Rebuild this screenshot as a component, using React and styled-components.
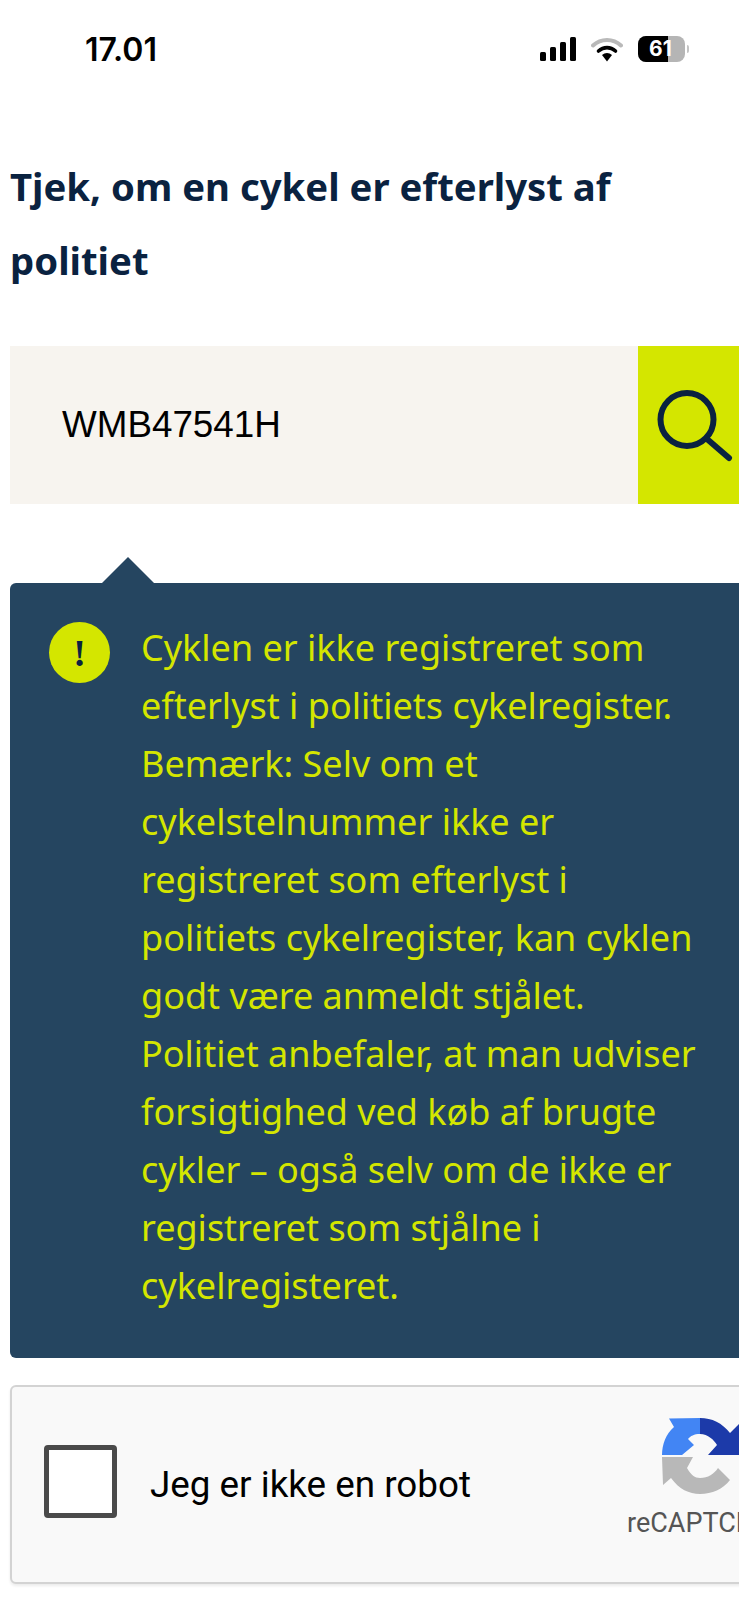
import React from 'react'
import styled, { createGlobalStyle } from 'styled-components'

const GlobalStyle = createGlobalStyle`
  html, body {
    margin: 0;
    background: #fff;
  }
`

const LINES = [
  'Cyklen er ikke registreret som',
  'efterlyst i politiets cykelregister.',
  'Bemærk: Selv om et',
  'cykelstelnummer ikke er',
  'registreret som efterlyst i',
  'politiets cykelregister, kan cyklen',
  'godt være anmeldt stjålet.',
  'Politiet anbefaler, at man udviser',
  'forsigtighed ved køb af brugte',
  'cykler – også selv om de ikke er',
  'registreret som stjålne i',
  'cykelregisteret.',
]

function App() {
  return (
    <Page>
      <GlobalStyle />
      <StatusBar>
        <Time>17.01</Time>
        <StatusIcons>
          <svg width="36" height="24" viewBox="0 0 36 24" fill="#000">
            <rect x="0" y="15" width="6" height="9" rx="1.5" />
            <rect x="10" y="10" width="6" height="14" rx="1.5" />
            <rect x="20" y="5" width="6" height="19" rx="1.5" />
            <rect x="30" y="0" width="6" height="24" rx="1.5" />
          </svg>
          <svg width="32" height="25" viewBox="0 0 32 25" fill="none">
            <path d="M2 8.5C10 1 22 1 30 8.5" stroke="#b9b9b9" strokeWidth="4" strokeLinecap="round" />
            <path d="M7.5 14C12.5 9.5 19.5 9.5 24.5 14" stroke="#000" strokeWidth="3.6" strokeLinecap="round" />
            <path d="M11 18C14 15.2 18 15.2 21 18L16 24.5Z" fill="#000" />
          </svg>
          <Battery>
            <BatteryLevel />
            <BatteryText>61</BatteryText>
            <BatteryTip />
          </Battery>
        </StatusIcons>
      </StatusBar>

      <Heading>Tjek, om en cykel er efterlyst af politiet</Heading>

      <SearchRow>
        <SearchField>WMB47541H</SearchField>
        <SearchButton aria-label="Søg">
          <svg width="101" height="100" viewBox="0 0 101 100" fill="none">
            <circle cx="49" cy="44.5" r="26.5" stroke="#0a2240" strokeWidth="6" />
            <path d="M69 64L91 83" stroke="#0a2240" strokeWidth="6" strokeLinecap="round" />
          </svg>
        </SearchButton>
      </SearchRow>

      <Notice>
        <AlertIcon>!</AlertIcon>
        <NoticeText>
          {LINES.map((line) => (
            <NoticeLine key={line}>{line}</NoticeLine>
          ))}
        </NoticeText>
      </Notice>

      <Captcha>
        <CheckBox />
        <CaptchaLabel>Jeg er ikke en robot</CaptchaLabel>
        <CaptchaBrand>
          <svg width="80" height="80" viewBox="0 0 80 80">
            <path d="M2 40C2 29 6 19 14 12L9 3.5L40 3V19C34 19 30.5 21 28 24L34 30L22 40Z" fill="#4285f4" />
            <path d="M40 3C52 3 62 8 70 18L79 9V40H48L57 30C54 25 48 19 40 19Z" fill="#1c3aa9" />
            <path d="M2 42H33L27 53C31 60 35 63 40 63C48 63 54 59 58 53L70 65C63 74 52 79 40 79C29 79 19 74 11 63L3 70Z" fill="#b8b8b8" />
          </svg>
          <BrandName>reCAPTCHA</BrandName>
        </CaptchaBrand>
      </Captcha>
    </Page>
  )
}

const Page = styled.div`
  width: 739px;
  height: 1600px;
  overflow: hidden;
  box-sizing: border-box;
  padding-left: 10px;
  background: #fff;
`

const StatusBar = styled.div`
  height: 149px;
  display: flex;
  justify-content: space-between;
  align-items: flex-start;
  padding: 32px 54px 0 75px;
  box-sizing: border-box;
`

const Time = styled.div`
  font-family: Inter, sans-serif;
  font-weight: 600;
  font-size: 32px;
  line-height: 36px;
  color: #000;
`

const StatusIcons = styled.div`
  display: flex;
  align-items: center;
  gap: 15px;
  margin-top: 4px;
`

const Battery = styled.div`
  position: relative;
  width: 47px;
  height: 26px;
  border-radius: 8px;
  background: #b5b5b5;
`

const BatteryLevel = styled.div`
  width: 30px;
  height: 100%;
  background: #000;
  border-radius: 8px 0 0 8px;
`

const BatteryText = styled.span`
  position: absolute;
  left: 11px;
  top: 0;
  font-family: Inter, sans-serif;
  font-weight: 700;
  font-size: 21px;
  line-height: 26px;
  color: #fff;
`

const BatteryTip = styled.div`
  position: absolute;
  right: -4px;
  top: 9px;
  width: 2px;
  height: 8px;
  border-radius: 0 2px 2px 0;
  background: #c4c4c4;
`

const Heading = styled.h1`
  margin: 0 0 49px;
  width: 640px;
  font-family: 'Noto Sans', sans-serif;
  font-weight: 700;
  font-size: 38.3px;
  line-height: 74px;
  color: #0a2240;
`

const SearchRow = styled.div`
  display: flex;
  height: 158px;
`

const SearchField = styled.div`
  width: 628px;
  box-sizing: border-box;
  padding-left: 52px;
  display: flex;
  align-items: center;
  background: #f7f4ef;
  font-family: 'Liberation Sans', Arial, sans-serif;
  font-size: 36.8px;
  color: #000;
`

const SearchButton = styled.button`
  width: 101px;
  border: 0;
  padding: 0;
  background: #d4e600;
  display: flex;
  align-items: center;
  justify-content: center;
`

const Notice = styled.div`
  position: relative;
  margin-top: 79px;
  height: 775px;
  box-sizing: border-box;
  padding: 36px 0 0 39px;
  display: flex;
  gap: 31px;
  border-radius: 6px 0 0 6px;
  background: #254560;

  &::before {
    content: '';
    position: absolute;
    left: 92px;
    top: -26px;
    border-left: 26px solid transparent;
    border-right: 26px solid transparent;
    border-bottom: 26px solid #254560;
  }
`

const AlertIcon = styled.div`
  flex: none;
  width: 61px;
  height: 61px;
  margin-top: 3px;
  border-radius: 50%;
  background: #d4e600;
  display: flex;
  align-items: center;
  justify-content: center;
  font-family: 'Liberation Serif', serif;
  font-weight: 700;
  font-size: 38px;
  color: #0a2240;
`

const NoticeText = styled.div`
  font-family: 'Noto Sans', sans-serif;
  font-size: 36px;
  line-height: 58px;
  color: #d4e600;
`

const NoticeLine = styled.div`
  white-space: nowrap;
`

const Captcha = styled.div`
  margin-top: 27px;
  width: 780px;
  height: 199px;
  box-sizing: border-box;
  border: 2px solid #d3d3d3;
  border-radius: 6px;
  background: #f9f9f9;
  box-shadow: 0 2px 3px rgba(0, 0, 0, 0.08);
  display: flex;
  align-items: center;
  padding-left: 32px;
`

const CheckBox = styled.div`
  flex: none;
  width: 73px;
  height: 73px;
  margin-bottom: 7px;
  box-sizing: border-box;
  border: 5px solid #4a4a4a;
  border-radius: 4px;
  background: #fff;
`

const CaptchaLabel = styled.div`
  margin-left: 33px;
  font-family: Roboto, sans-serif;
  font-size: 36.8px;
  color: #000;
`

const CaptchaBrand = styled.div`
  margin-left: auto;
  margin-right: 18px;
  margin-bottom: 17px;
  width: 140px;
  display: flex;
  flex-direction: column;
  align-items: center;
`

const BrandName = styled.div`
  margin-top: 13px;
  font-family: Roboto, sans-serif;
  font-size: 27px;
  line-height: 30px;
  color: #555;
  white-space: nowrap;
`

export default App
